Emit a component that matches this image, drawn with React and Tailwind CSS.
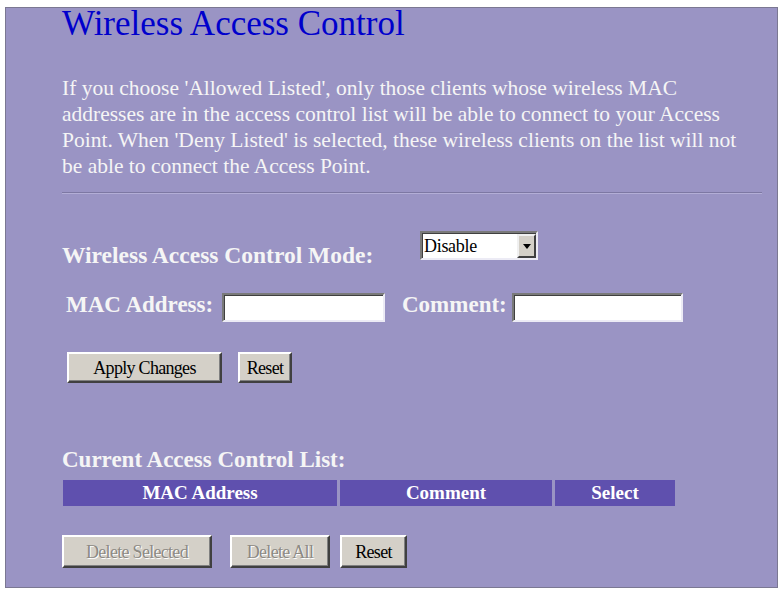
import React from 'react';

const serif = { fontFamily: '"Liberation Serif", "Times New Roman", serif' };

const WinButton = ({ label, width, height, disabled }) => (
  <button
    type="button"
    disabled={disabled}
    className={
      'flex items-center justify-center bg-[#d4d0c8] border-2 border-t-white border-l-white border-r-[#404040] border-b-[#404040] shadow-[inset_-1px_-1px_0_#808080] text-[18px] tracking-[-0.7px] leading-none ' +
      (disabled ? 'text-[#8d8a84] [text-shadow:1px_1px_0_#ffffff]' : 'text-black')
    }
    style={{ ...serif, width, height }}
  >
    {label}
  </button>
);

const TextBox = ({ width }) => (
  <input
    type="text"
    className="h-[29px] bg-white border-2 border-t-[#7a7a7a] border-l-[#7a7a7a] border-r-[#ecebf5] border-b-[#ecebf5] shadow-[inset_1px_1px_0_#404040] outline-none"
    style={{ width }}
  />
);

const App = () => {
  const columns = [
    { name: 'MAC Address', width: 'w-[274px]' },
    { name: 'Comment', width: 'w-[212px]' },
    { name: 'Select', width: 'w-[120px]' },
  ];

  return (
    <div className="w-[781px] h-[590px] bg-white pt-[7px] pl-[5px] overflow-hidden" style={serif}>
      <div className="w-[773px] h-[581px] bg-[#9a94c4] border border-[#7b7892] pl-[56px] flex flex-col">
        <h1 className="mt-[-2px] text-[35px] leading-[36px] text-[#0000cc] font-normal whitespace-nowrap">
          Wireless Access Control
        </h1>

        <p className="mt-[33px] text-[21.5px] leading-[26px] text-[#f5f5f5] whitespace-nowrap">
          If you choose 'Allowed Listed', only those clients whose wireless MAC<br />
          addresses are in the access control list will be able to connect to your Access<br />
          Point. When 'Deny Listed' is selected, these wireless clients on the list will not<br />
          be able to connect the Access Point.
        </p>

        <div className="mt-[13px] w-[700px] border-t border-t-[#7d78a3] border-b border-b-[#b3aed6]" />

        <div className="mt-[37px] flex items-start">
          <span className="w-[358px] mt-[12px] text-[23.5px] leading-[24px] font-bold text-[#f5f5f5] whitespace-nowrap">
            Wireless Access Control Mode:
          </span>
          <div className="relative w-[118px] h-[29px] bg-white border-2 border-t-[#7a7a7a] border-l-[#7a7a7a] border-r-[#ecebf5] border-b-[#ecebf5] shadow-[inset_1px_1px_0_#404040] flex items-center">
            <span className="pl-[2px] text-[18px] tracking-[-0.3px] text-black leading-none">Disable</span>
            <span className="absolute right-0 top-[1px] bottom-0 w-[19px] bg-[#d4d0c8] border-2 border-t-[#f0f0f0] border-l-[#f0f0f0] border-r-[#404040] border-b-[#404040] flex items-center justify-center">
              <svg width="8" height="5" viewBox="0 0 8 5">
                <path d="M0 0h8L4 5z" fill="#000" />
              </svg>
            </span>
          </div>
        </div>

        <div className="mt-[26px] flex items-start">
          <span className="ml-[4px] w-[156px] text-[23px] leading-[24px] font-bold text-[#f5f5f5] whitespace-nowrap">
            MAC Address:
          </span>
          <TextBox width={163} />
          <span className="ml-[17px] w-[110px] text-[23px] leading-[24px] font-bold text-[#f5f5f5] whitespace-nowrap">
            Comment:
          </span>
          <TextBox width={171} />
        </div>

        <div className="mt-[30px] ml-[5px] flex gap-[16px]">
          <WinButton label="Apply Changes" width={155} height={31} />
          <WinButton label="Reset" width={54} height={31} />
        </div>

        <span className="mt-[65px] text-[23px] leading-[24px] font-bold text-[#f5f5f5] whitespace-nowrap">
          Current Access Control List:
        </span>

        <div className="mt-[8px] ml-[1px] flex gap-[3px]">
          {columns.map((col) => (
            <div
              key={col.name}
              className={col.width + ' h-[26px] bg-[#5f50ae] flex items-center justify-center text-[19px] font-bold text-white'}
            >
              {col.name}
            </div>
          ))}
        </div>

        <div className="mt-[29px] flex">
          <WinButton label="Delete Selected" width={150} height={33} disabled />
          <div className="ml-[18px]">
            <WinButton label="Delete All" width={100} height={33} disabled />
          </div>
          <div className="ml-[10px]">
            <WinButton label="Reset" width={67} height={33} />
          </div>
        </div>
      </div>
    </div>
  );
};

export default App;
